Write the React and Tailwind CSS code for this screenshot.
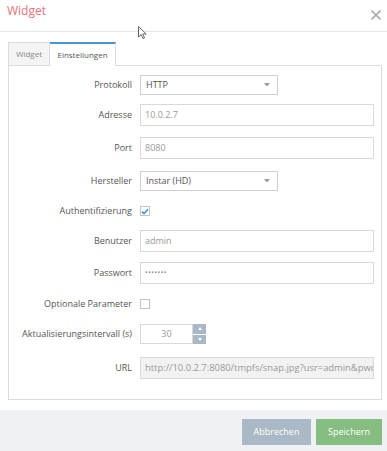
import { useState } from 'react'

const inputCls = 'h-full border border-[#d9d9d9] bg-white pl-[4px] flex items-center text-[9px] text-[#999]'

function Select({ value }) {
  return (
    <div className="h-full w-[138px] border border-[#cfcfcf] bg-white pl-[5px] pr-[7px] flex items-center justify-between text-[9px] text-[#555]">
      <span>{value}</span>
      <svg width="6" height="4" viewBox="0 0 6 4"><path d="M0 0h6L3 3.5z" fill="#9a9a9a" /></svg>
    </div>
  )
}

function Check({ checked }) {
  return (
    <div className="w-[10px] h-[10px] border border-[#c4c4c4] bg-white flex items-center justify-center">
      {checked && (
        <svg width="8" height="7" viewBox="0 0 8 7">
          <path d="M1 3.6l2 2L7 1.2" fill="none" stroke="#3d97dc" strokeWidth="1.6" />
        </svg>
      )}
    </div>
  )
}

function Row({ label, mt, h, children }) {
  return (
    <div className={`flex items-center ${mt} ${h}`}>
      <div className="w-[123px] shrink-0 text-right text-[9px] text-[#555] whitespace-nowrap">{label}</div>
      <div className="ml-[8px] flex-1 min-w-0 h-full flex items-center">{children}</div>
    </div>
  )
}

export default function App() {
  const [tab, setTab] = useState('settings')

  return (
    <div className="w-[387px] h-[451px] bg-white font-['Open_Sans',sans-serif] relative overflow-hidden">

      <div className="h-[32px] border-b border-[#e6e6e6] flex justify-between pl-[7px] pr-[6px] pt-[3px]">
        <div className="text-[12px] leading-[16px] text-[#e8737d]">Widget</div>
        <svg className="mt-[7px]" width="10" height="10" viewBox="0 0 10 10">
          <path d="M0.5 0.5l9 9M9.5 0.5l-9 9" stroke="#ababab" strokeWidth="1.6" />
        </svg>
      </div>

      <div className="pt-[10px] pl-[8px] pr-[5px]">
        <div className="flex h-[24px] -mb-px relative">
          <button
            onClick={() => setTab('widget')}
            className={`w-[42px] h-[24px] border border-[#dcdcdc] text-[8px] ${tab === 'widget' ? 'bg-white border-t-2 border-t-[#4a93d6] border-b-white text-[#555]' : 'bg-[#f4f4f4] text-[#888]'}`}
          >
            Widget
          </button>
          <button
            onClick={() => setTab('settings')}
            className={`w-[66px] h-[24px] border border-l-0 border-[#dcdcdc] text-[8px] ${tab === 'settings' ? 'bg-white border-t-2 border-t-[#4a93d6] border-b-white text-[#555]' : 'bg-[#f4f4f4] text-[#888]'}`}
          >
            Einstellungen
          </button>
        </div>

        <div className="h-[335px] border border-[#dcdcdc] pr-[7px]">
          <Row label="Protokoll" mt="mt-[9px]" h="h-[20px]">
            <Select value="HTTP" />
          </Row>
          <Row label="Adresse" mt="mt-[9px]" h="h-[22px]">
            <div className={`${inputCls} w-full`}>10.0.2.7</div>
          </Row>
          <Row label="Port" mt="mt-[11px]" h="h-[22px]">
            <div className={`${inputCls} w-full`}>8080</div>
          </Row>
          <Row label="Hersteller" mt="mt-[12px]" h="h-[20px]">
            <Select value="Instar (HD)" />
          </Row>
          <Row label="Authentifizierung" mt="mt-[9px]" h="h-[22px]">
            <Check checked />
          </Row>
          <Row label="Benutzer" mt="mt-[8px]" h="h-[22px]">
            <div className={`${inputCls} w-full`}>admin</div>
          </Row>
          <Row label="Passwort" mt="mt-[10px]" h="h-[22px]">
            <div className={`${inputCls} w-full`}>
              <span className="text-[7px] tracking-[0.5px] text-[#888]">•••••••</span>
            </div>
          </Row>
          <Row label="Optionale Parameter" mt="mt-[9px]" h="h-[22px]">
            <Check />
          </Row>
          <Row label="Aktualisierungsintervall (s)" mt="mt-[9px]" h="h-[20px]">
            <div className="h-full w-[53px] border border-[#d9d9d9] flex items-center justify-center text-[9px] text-[#999]">30</div>
            <div className="h-full w-[13px] flex flex-col gap-px">
              <div className="flex-1 bg-[#a8b8c6] flex items-center justify-center">
                <svg width="4" height="3" viewBox="0 0 4 3"><path d="M0 3h4L2 0z" fill="#fff" /></svg>
              </div>
              <div className="flex-1 bg-[#a8b8c6] flex items-center justify-center">
                <svg width="4" height="3" viewBox="0 0 4 3"><path d="M0 0h4L2 3z" fill="#fff" /></svg>
              </div>
            </div>
          </Row>
          <Row label="URL" mt="mt-[13px]" h="h-[22px]">
            <div className="h-full w-full min-w-0 border border-[#d9d9d9] bg-[#f2f2f2] pl-[4px] flex items-center text-[9.4px] text-[#999] whitespace-nowrap overflow-hidden">
              http://10.0.2.7:8080/tmpfs/snap.jpg?usr=admin&amp;pwd=admin
            </div>
          </Row>
        </div>
      </div>

      <div className="mt-[10px] h-[41px] bg-[#eff1f4] flex justify-end items-start gap-[5px] pt-[9px] pr-[5px]">
        <button className="w-[69px] h-[26px] bg-[#a9b9c6] text-white text-[9px]">Abbrechen</button>
        <button className="w-[66px] h-[26px] bg-[#86bd80] text-white text-[9px]">Speichern</button>
      </div>

      <svg className="absolute left-[138px] top-[26px]" width="9" height="13" viewBox="0 0 9 13">
        <path d="M0.5 0.5v10.5l2.6-2.4 1.8 3.9 1.6-0.7-1.8-3.8h3.5z" fill="#fff" stroke="#555" strokeWidth="0.9" strokeLinejoin="round" />
      </svg>
    </div>
  )
}
